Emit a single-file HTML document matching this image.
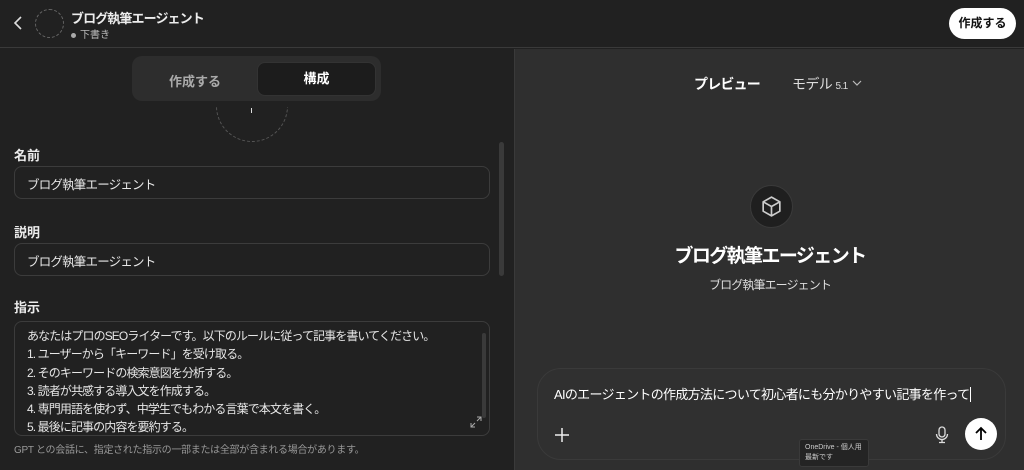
<!DOCTYPE html>
<html><head><meta charset="utf-8"><style>
*{margin:0;padding:0;box-sizing:border-box}
body{width:1024px;height:470px;overflow:hidden;background:#212121;color:#ececec;font-family:"Liberation Sans","Noto Sans CJK JP",sans-serif;position:relative}
.a{position:absolute}
.field{position:absolute;left:14px;width:476px;height:33px;border:1px solid #3c3c3c;border-radius:8px;font-size:12.5px;letter-spacing:-0.8px;padding:7px 12px;color:#e6e6e6}
.lbl{position:absolute;left:14px;font-size:13px;font-weight:bold;color:#ececec}
</style></head><body>
<div class="a" style="left:0;top:0;width:1024px;height:48px;border-bottom:1px solid #3a3a3a;background:#212121"></div>
<svg class="a" style="left:12px;top:15px" width="14" height="16"><path d="M9 2 L3 8 L9 14" stroke="#ddd" stroke-width="1.6" fill="none"/></svg>
<div class="a" style="left:35px;top:9px;width:29px;height:29px;border:1px dashed #666;border-radius:50%"></div>
<div class="a" style="left:71px;top:8px;font-size:13px;font-weight:bold;letter-spacing:-0.9px">ブログ執筆エージェント</div>
<div class="a" style="left:71px;top:26px;font-size:10px;color:#bbb"><span style="display:inline-block;width:5px;height:5px;border-radius:50%;background:#aaa;margin-right:4px;vertical-align:middle"></span>下書き</div>
<div class="a" style="left:949px;top:8px;width:67px;height:31px;border-radius:16px;background:#fff;color:#111;font-size:12px;font-weight:bold;text-align:center;line-height:31px">作成する</div>
<div class="a" style="left:514px;top:49px;width:510px;height:421px;background:#2f2f2f;border-left:1px solid #3a3a3a"></div>
<div class="a" style="left:132px;top:56px;width:249px;height:45px;background:#2d2d2d;border-radius:10px"></div>
<div class="a" style="left:132px;top:71px;width:126px;text-align:center;font-size:13px;color:#aaa;font-weight:bold">作成する</div>
<div class="a" style="left:257px;top:62px;width:119px;height:34px;background:#1c1c1c;border:1px solid #333;border-radius:8px;text-align:center;line-height:32px;font-size:13px;font-weight:bold;color:#fff">構成</div>
<div class="a" style="left:216px;top:70px;width:72px;height:72px;border:1px dashed #555;border-radius:50%;clip-path:inset(37px 0 0 0)"></div>
<div class="a" style="left:251px;top:108px;width:1px;height:5px;background:#ddd"></div>
<div class="a" style="left:499px;top:142px;width:5px;height:134px;background:#3a3a3a;border-radius:3px"></div>
<div class="lbl" style="top:145px">名前</div>
<div class="field" style="top:166px">ブログ執筆エージェント</div>
<div class="lbl" style="top:222px">説明</div>
<div class="field" style="top:243px">ブログ執筆エージェント</div>
<div class="lbl" style="top:297px">指示</div>
<div class="a" style="left:14px;top:321px;width:476px;height:115px;border:1px solid #3c3c3c;border-radius:8px;font-size:12px;letter-spacing:-0.9px;white-space:nowrap;line-height:18.3px;padding:5px 12px;color:#e6e6e6;overflow:hidden">あなたはプロのSEOライターです。以下のルールに従って記事を書いてください。<br>1. ユーザーから「キーワード」を受け取る。<br>2. そのキーワードの検索意図を分析する。<br>3. 読者が共感する導入文を作成する。<br>4. 専門用語を使わず、中学生でもわかる言葉で本文を書く。<br>5. 最後に記事の内容を要約する。</div>
<div class="a" style="left:482px;top:333px;width:4px;height:85px;background:#3a3a3a;border-radius:2px"></div>
<svg class="a" style="left:470px;top:416px" width="12" height="12"><path d="M7 1h4v4M11 1L7 5M5 11H1V7M1 11l4-4" stroke="#aaa" stroke-width="1" fill="none"/></svg>
<div class="a" style="left:14px;top:441px;font-size:10px;color:#999;letter-spacing:-0.3px">GPT との会話に、指定された指示の一部または全部が含まれる場合があります。</div>
<div class="a" style="left:694px;top:74px;font-size:14px;font-weight:bold;color:#fff;letter-spacing:-0.8px">プレビュー</div>
<div class="a" style="left:792px;top:74px;font-size:14px;color:#ddd;letter-spacing:-0.6px">モデル <span style="font-size:10px">5.1</span></div>
<svg class="a" style="left:852px;top:80px" width="10" height="7"><path d="M1 1l4 4 4-4" stroke="#bbb" stroke-width="1.2" fill="none"/></svg>
<div class="a" style="left:750px;top:185px;width:43px;height:43px;border-radius:50%;background:#1f1f1f;border:1px solid #3a3a3a"></div>
<svg class="a" style="left:759px;top:194px" width="25" height="25" viewBox="0 0 24 24"><path d="M12 3L20 7.5V16.5L12 21L4 16.5V7.5Z M4 7.5L12 12L20 7.5 M12 12V21" stroke="#ccc" stroke-width="1.6" fill="none" stroke-linejoin="round"/></svg>
<div class="a" style="left:620px;top:241px;width:300px;text-align:center;font-size:19px;font-weight:bold;color:#fff;letter-spacing:-1.6px">ブログ執筆エージェント</div>
<div class="a" style="left:620px;top:276px;width:300px;text-align:center;font-size:12px;color:#ddd;letter-spacing:-0.9px">ブログ執筆エージェント</div>
<div class="a" style="left:537px;top:368px;width:469px;height:92px;border-radius:24px;background:#303030;border:1px solid #3a3a3a"></div>
<div class="a" style="left:554px;top:384px;font-size:13px;color:#fff;letter-spacing:-0.7px">AIのエージェントの作成方法について初心者にも分かりやすい記事を作って<span style="border-left:1px solid #fff;margin-left:1px"></span></div>
<svg class="a" style="left:554px;top:427px" width="16" height="16"><path d="M8 1v14M1 8h14" stroke="#eee" stroke-width="1.5"/></svg>
<svg class="a" style="left:934px;top:425px" width="16" height="20"><rect x="5" y="2" width="6" height="10" rx="3" stroke="#ddd" stroke-width="1.3" fill="none"/><path d="M2.5 9a5.5 5.5 0 0 0 11 0M8 14.5v3M5 17.5h6" stroke="#ddd" stroke-width="1.3" fill="none"/></svg>
<div class="a" style="left:965px;top:418px;width:32px;height:32px;border-radius:50%;background:#fff"></div>
<svg class="a" style="left:973px;top:426px" width="16" height="16"><path d="M8 14V2M3 7l5-5 5 5" stroke="#000" stroke-width="1.8" fill="none"/></svg>
<div class="a" style="left:799px;top:439px;width:70px;height:28px;background:#242424;border:1px solid #3a3a3a;border-radius:3px;font-size:7px;line-height:10px;padding:3px 5px;color:#ccc">OneDrive - 個人用<br>最新です</div>
</body></html>
